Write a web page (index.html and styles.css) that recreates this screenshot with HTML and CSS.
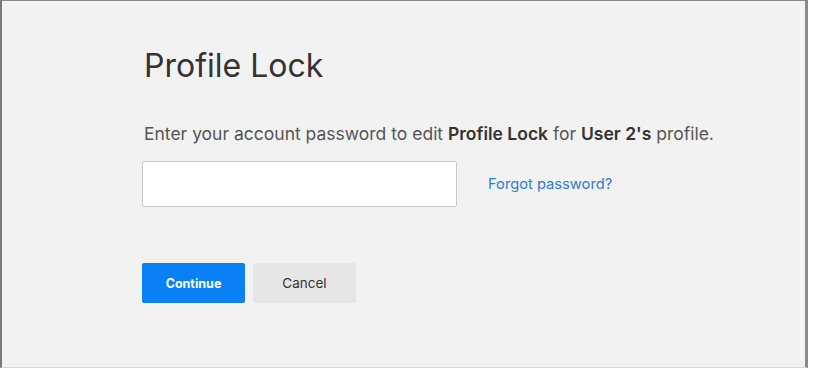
FILE: index.html
```html
<!DOCTYPE html>
<html lang="en">
<head>
    <meta charset="UTF-8">
    <meta name="viewport" content="width=device-width, initial-scale=1.0">
    <title>Profile Lock</title>
    <link rel="stylesheet" href="styles.css">
</head>
<body>
    <div class="frame">
        <div class="lock-panel">
            <h1 class="title">Profile Lock</h1>
            <p class="desc">Enter your account password to edit <b>Profile Lock</b> for <b>User 2's</b> profile.</p>
            <div class="password-row">
                <input type="password" class="password-input">
                <a href="#" class="forgot">Forgot password?</a>
            </div>
            <div class="actions">
                <button class="btn btn-primary">Continue</button>
                <button class="btn btn-secondary">Cancel</button>
            </div>
        </div>
    </div>
</body>
</html>
```

FILE: styles.css
```css
* {
    margin: 0;
    padding: 0;
    box-sizing: border-box;
    font-family: Inter, 'Liberation Sans', sans-serif;
}

body {
    background: #fff;
    width: 814px;
    height: 369px;
    overflow: hidden;
}

.frame {
    width: 808px;
    height: 368px;
    background: #f2f2f2;
    border-left: 2px solid #7a7a7a;
    border-right: 3px solid #8a8a8a;
    border-top: 1px solid #8a8a8a;
    border-bottom: 1px solid #d6d6d6;
    padding: 46px 0 0 140px;
}

.title {
    font-size: 32px;
    font-weight: normal;
    line-height: 38px;
    color: #333;
    padding-left: 2px;
}

.desc {
    margin-top: 37px;
    font-size: 17.5px;
    line-height: 24px;
    color: #555;
    padding-left: 2px;
}

.desc b {
    color: #333;
    font-weight: 600;
}

.password-row {
    margin-top: 15px;
    display: flex;
    align-items: center;
    gap: 31px;
}

.password-input {
    width: 315px;
    height: 46px;
    border: 1px solid #c8c8c8;
    background: #fff;
    border-radius: 2px;
    font-size: 16px;
    padding: 0 12px;
}

.forgot {
    font-size: 14.7px;
    color: #2f7bd4;
    text-decoration: none;
}

.actions {
    margin-top: 56px;
    display: flex;
    gap: 8px;
}

.btn {
    width: 103px;
    height: 40px;
    border: none;
    border-radius: 2px;
    font-size: 12.5px;
    cursor: pointer;
}

.btn-primary {
    background: #0a80f5;
    color: #fff;
    font-weight: bold;
}

.btn-secondary {
    background: #e6e6e6;
    color: #333;
    font-size: 13.5px;
}
```
